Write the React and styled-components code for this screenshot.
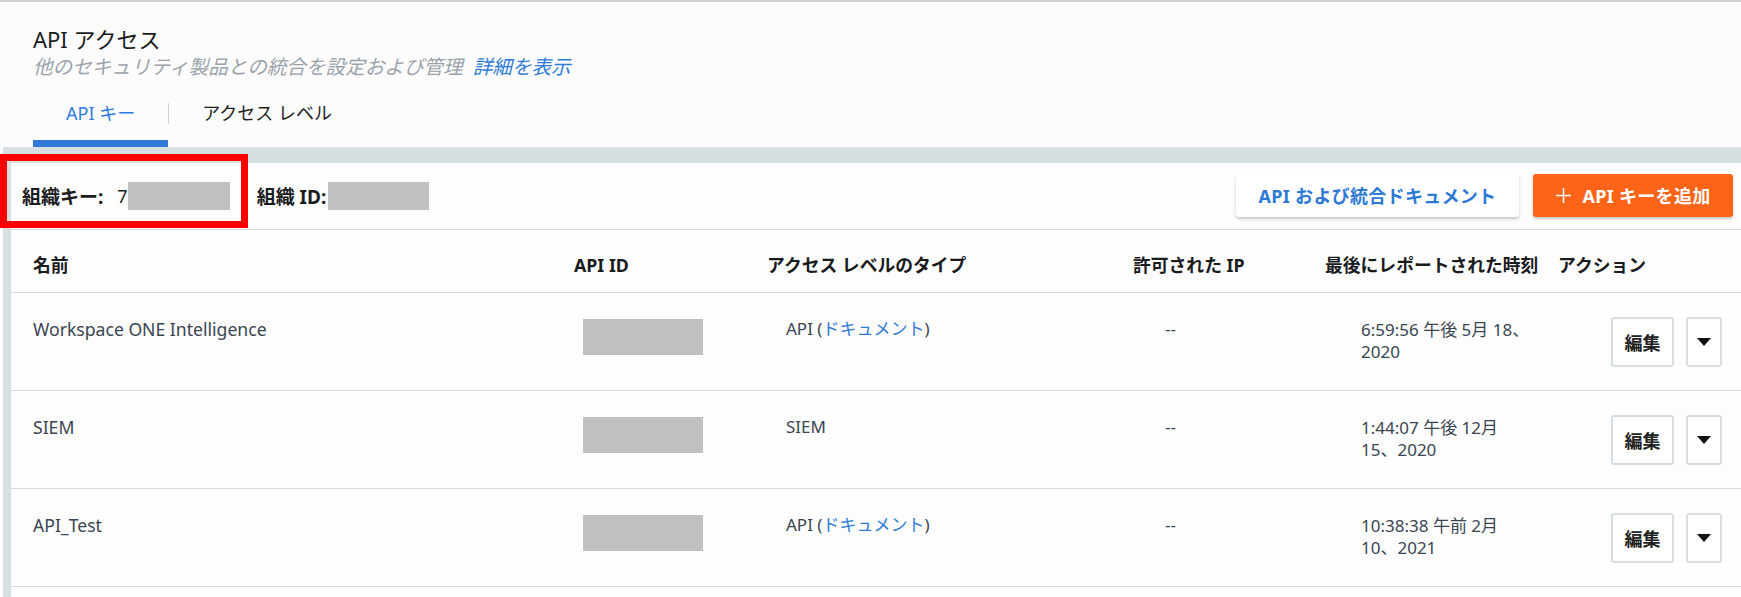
import React from "react";
import styled, { createGlobalStyle } from "styled-components";

const Global = createGlobalStyle`
  html, body { margin: 0; padding: 0; }
  body {
    background: #fcfcfc;
    font-family: "Noto Sans", "Noto Sans CJK JP", sans-serif;
    color: #1d1f22;
  }
`;

const Page = styled.div`
  width: 1741px;
  height: 597px;
  overflow: hidden;
  border-top: 2px solid #d2d2d2;
  box-sizing: border-box;
  background: #fcfcfc;
`;

const Header = styled.header`
  padding: 23px 0 0 33px;
`;

const Title = styled.h1`
  margin: 0;
  font-size: 22px;
  line-height: 28px;
  font-weight: 400;
  color: #1b1c1e;
`;

const Subtitle = styled.p`
  margin: 1px 0 0;
  font-size: 19.6px;
  line-height: 26px;
  font-style: italic;
  color: #9aa3ac;
`;

const Link = styled.a`
  color: #2f7bd8;
  font-style: ${(p) => (p.$italic ? "italic" : "normal")};
  text-decoration: none;
  margin-left: ${(p) => p.$ml || 0}px;
`;

const Tabs = styled.nav`
  display: flex;
  align-items: flex-start;
`;

const Tab = styled.div`
  padding: 21px 33px 15px;
  font-size: 18px;
  line-height: 24px;
  color: ${(p) => (p.$active ? "#2d7be0" : "#1e1f21")};
  border-bottom: 7px solid ${(p) => (p.$active ? "#2f7ad9" : "transparent")};
`;

const TabDivider = styled.span`
  width: 1px;
  height: 21px;
  margin-top: 23px;
  background: #d0d4d8;
`;

const Band = styled.section`
  margin-left: 3px;
  padding: 16px 0 0 8px;
  background: #d8dfe3;
`;

const Card = styled.div`
  position: relative;
  background: #fdfdfd;
  height: 440px;
`;

const OrgRow = styled.div`
  display: flex;
  align-items: center;
  height: 66px;
  padding: 0 8px 0 11px;
  border-bottom: 1px solid #d3dce2;
`;

const OrgLabel = styled.span`
  font-size: 19px;
  font-weight: 700;
  color: #1b1c1e;
  margin-left: ${(p) => p.$ml || 0}px;
`;

const OrgValue = styled.span`
  font-size: 18px;
  color: #1b1c1e;
  margin-left: ${(p) => p.$ml || 0}px;
`;

const Mask = styled.span`
  display: inline-block;
  width: ${(p) => p.$w}px;
  height: ${(p) => p.$h}px;
  background: #c0c0c0;
  margin-left: ${(p) => p.$ml || 0}px;
`;

const Actions = styled.div`
  margin-left: auto;
  display: flex;
  gap: 14px;
  margin-top: -2px;
`;

const Button = styled.button`
  height: 43px;
  width: ${(p) => p.$w}px;
  flex-shrink: 0;
  border: none;
  border-radius: 3px;
  font-family: inherit;
  font-size: 18px;
  font-weight: 700;
  letter-spacing: 0.3px;
  cursor: pointer;
  display: flex;
  align-items: center;
  justify-content: center;
  gap: 10px;
  padding: 0;
  background: ${(p) => (p.$primary ? "#fd6417" : "#ffffff")};
  color: ${(p) => (p.$primary ? "#ffffff" : "#2e79d6")};
  box-shadow: 0 2px 3px rgba(0, 0, 0, 0.22);
`;

const Grid = styled.div`
  display: grid;
  grid-template-columns: 541px 193px 366px 192px 233px 1fr;
  padding-left: 22px;
  min-height: ${(p) => p.$h}px;
  box-sizing: border-box;
  padding-top: ${(p) => p.$pt}px;
  border-bottom: 1px solid #d3dce2;
`;

const HeadCell = styled.div`
  font-size: 17.8px;
  line-height: 24px;
  font-weight: 700;
  color: #1a1b1d;
  white-space: nowrap;
`;

const Cell = styled.div`
  padding-left: ${(p) => p.$indent || 0}px;
  padding-top: ${(p) => p.$pt || 0}px;
  font-size: ${(p) => p.$size || 17}px;
  line-height: ${(p) => p.$lh || 24}px;
  color: #3a4551;
  display: flex;
  flex-direction: ${(p) => (p.$row ? "row" : "column")};
  align-items: flex-start;
  gap: ${(p) => p.$gap || 0}px;
`;

const SmallButton = styled.button`
  height: 50px;
  width: ${(p) => p.$w}px;
  box-sizing: border-box;
  border: 2px solid #d6dee4;
  border-radius: 3px;
  background: #ffffff;
  font-family: inherit;
  font-size: 18px;
  font-weight: 700;
  color: #222;
  display: flex;
  align-items: center;
  justify-content: center;
  padding: 0;
`;

const Annotation = styled.div`
  position: absolute;
  left: -11px;
  top: -9px;
  width: 248px;
  height: 74px;
  box-sizing: border-box;
  border: 7px solid #ff0000;
  pointer-events: none;
`;

const rows = [
  {
    name: "Workspace ONE Intelligence",
    type: "api",
    date: ["6:59:56 午後 5月 18、", "2020"],
  },
  { name: "SIEM", type: "siem", date: ["1:44:07 午後 12月", "15、2020"] },
  { name: "API_Test", type: "api", date: ["10:38:38 午前 2月", "10、2021"] },
];

const Caret = () => (
  <svg width="16" height="10" viewBox="0 0 16 10">
    <polygon points="1,1 15,1 8,9" fill="#111" />
  </svg>
);

export default function App() {
  return (
    <>
      <Global />
      <Page>
        <Header>
          <Title>API アクセス</Title>
          <Subtitle>
            他のセキュリティ製品との統合を設定および管理
            <Link href="#" $italic $ml={10}>詳細を表示</Link>
          </Subtitle>
          <Tabs>
            <Tab $active>API キー</Tab>
            <TabDivider />
            <Tab>アクセス レベル</Tab>
          </Tabs>
        </Header>
        <Band>
          <Card>
            <Annotation />
            <OrgRow>
              <OrgLabel>組織キー:</OrgLabel>
              <OrgValue $ml={14}>7</OrgValue>
              <Mask $w={102} $h={28} />
              <OrgLabel $ml={27}>組織 ID:</OrgLabel>
              <Mask $w={101} $h={28} $ml={2} />
              <Actions>
                <Button $w={283}>API および統合ドキュメント</Button>
                <Button $w={200} $primary>
                  <svg width="17" height="17" viewBox="0 0 17 17">
                    <path d="M8.5 1v15M1 8.5h15" stroke="#fff" strokeWidth="1.6" />
                  </svg>
                  API キーを追加
                </Button>
              </Actions>
            </OrgRow>
            <Grid $h={63} $pt={23}>
              <HeadCell>名前</HeadCell>
              <HeadCell>API ID</HeadCell>
              <HeadCell>アクセス レベルのタイプ</HeadCell>
              <HeadCell>許可された IP</HeadCell>
              <HeadCell>最後にレポートされた時刻</HeadCell>
              <HeadCell>アクション</HeadCell>
            </Grid>
            {rows.map((r) => (
              <Grid key={r.name} $h={98} $pt={24}>
                <Cell $size={17.6}>{r.name}</Cell>
                <Cell $indent={9} $pt={2}>
                  <Mask $w={120} $h={36} />
                </Cell>
                <Cell $indent={19}>
                  {r.type === "api" ? (
                    <span>
                      API (<Link href="#">ドキュメント</Link>)
                    </span>
                  ) : (
                    <span>SIEM</span>
                  )}
                </Cell>
                <Cell $indent={32}>--</Cell>
                <Cell $indent={36} $pt={2} $lh={22}>
                  <span>{r.date[0]}</span>
                  <span>{r.date[1]}</span>
                </Cell>
                <Cell $indent={53} $row $gap={12}>
                  <SmallButton $w={63}>編集</SmallButton>
                  <SmallButton $w={36}>
                    <Caret />
                  </SmallButton>
                </Cell>
              </Grid>
            ))}
          </Card>
        </Band>
      </Page>
    </>
  );
}
